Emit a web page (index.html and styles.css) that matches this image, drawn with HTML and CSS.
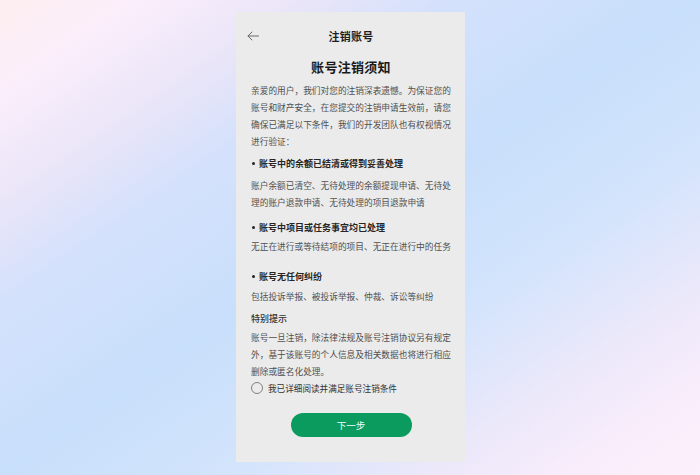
FILE: index.html
```html
<!DOCTYPE html>
<html lang="zh-CN">
<head>
<meta charset="utf-8">
<title>注销账号</title>
<link rel="stylesheet" href="styles.css">
</head>
<body>
<div class="stage">
  <div class="panel">
    <div class="header">
      <svg class="back" width="12" height="10" viewBox="0 0 12 10" aria-hidden="true">
        <path d="M11.5 5H1M5 1L1 5L5 9" fill="none" stroke="#6a6a6a" stroke-width="1" stroke-linecap="round" stroke-linejoin="round"/>
      </svg>
      <div class="title">注销账号</div>
    </div>
    <h1 class="heading">账号注销须知</h1>
    <p class="text intro">亲爱的用户，我们对您的注销深表遗憾。为保证您的账号和财产安全，在您提交的注销申请生效前，请您确保已满足以下条件，我们的开发团队也有权视情况进行验证：</p>

    <div class="item item1">
      <div class="item-title"><span class="dot"></span>账号中的余额已结清或得到妥善处理</div>
      <p class="text desc d1">账户余额已清空、无待处理的余额提现申请、无待处理的账户退款申请、无待处理的项目退款申请</p>
    </div>
    <div class="item item2">
      <div class="item-title"><span class="dot"></span>账号中项目或任务事宜均已处理</div>
      <p class="text desc d2">无正在进行或等待结项的项目、无正在进行中的任务</p>
    </div>
    <div class="item item3">
      <div class="item-title"><span class="dot"></span>账号无任何纠纷</div>
      <p class="text desc d3">包括投诉举报、被投诉举报、仲裁、诉讼等纠纷</p>
    </div>

    <div class="special">特别提示</div>
    <p class="text para">账号一旦注销，除法律法规及账号注销协议另有规定外，基于该账号的个人信息及相关数据也将进行相应删除或匿名化处理。</p>

    <label class="agree"><span class="radio"></span><span class="agree-text">我已详细阅读并满足账号注销条件</span></label>

    <button class="next" type="button">下一步</button>
  </div>
</div>
</body>
</html>
```

FILE: styles.css
```css
* { box-sizing: border-box; }
html, body { margin: 0; padding: 0; }
body {
  width: 700px;
  height: 475px;
  overflow: hidden;
  font-family: "Noto Sans CJK SC", "Noto Sans", sans-serif;
}
.stage {
  width: 700px;
  height: 475px;
  padding-top: 12px;
  display: flex;
  justify-content: center;
  background: linear-gradient(to bottom right,
    #fdeeef 0%,
    #fbeefb 10%,
    #e9e5f8 22%,
    #d4e1fc 32%,
    #c8dffb 50%,
    #d3e4fc 66%,
    #ebe8fa 80%,
    #f9edfb 91%,
    #fcf0fb 100%);
}
.panel {
  margin-left: 1px;
  width: 229px;
  height: 450px;
  background: #ebebeb;
  padding: 0 14px 0 15px;
  display: flex;
  flex-direction: column;
}
.header {
  height: 48px;
  display: flex;
  align-items: center;
  position: relative;
  justify-content: center;
}
.back {
  position: absolute;
  left: -4px;
  top: 19px;
}
.title {
  font-size: 11px;
  font-weight: 700;
  color: #1f1f1f;
  letter-spacing: 0.3px;
}
.heading {
  margin: 0;
  text-align: center;
  font-size: 13px;
  line-height: 14px;
  font-weight: 700;
  color: #1a1a1a;
  letter-spacing: 0.3px;
}
.text {
  margin: 0;
  font-size: 8.7px;
  line-height: 17px;
  color: #4f4f4f;
}
.intro { margin-top: 7.5px; }
.item-title {
  display: flex;
  align-items: center;
  font-size: 9px;
  line-height: 17px;
  font-weight: 700;
  color: #262626;
}
.dot {
  width: 3px;
  height: 3px;
  border-radius: 50%;
  background: #222;
  margin: 0 4px 0 1px;
}
.item1 { margin-top: 5px; }
.item2 { margin-top: 8px; }
.item3 { margin-top: 13px; }
.d1 { margin-top: 5px; }
.d2 { margin-top: 2px; }
.d3 { margin-top: 3px; }
.special {
  margin-top: 5px;
  font-size: 9px;
  line-height: 17px;
  font-weight: 500;
  color: #333;
}
.para { margin-top: 2px; }
.agree {
  display: flex;
  align-items: center;
  height: 17px;
  margin-top: 0;
}
.radio {
  width: 12px;
  height: 12px;
  border: 1.2px solid #808080;
  border-radius: 50%;
  margin-left: 0;
  margin-right: 5px;
}
.agree-text {
  font-size: 8.6px;
  color: #333;
}
.next {
  align-self: center;
  margin-top: 16.5px;
  width: 121px;
  height: 24px;
  border: none;
  border-radius: 12px;
  background: #0b9b5f;
  color: #f2fff8;
  font-family: "Noto Sans CJK SC", sans-serif;
  font-size: 9.5px;
  padding: 0;
}
```
